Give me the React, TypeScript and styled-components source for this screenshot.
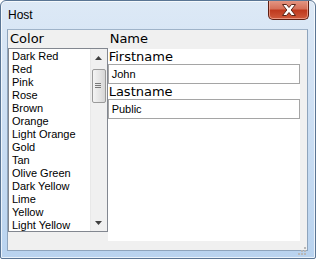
import styled, { createGlobalStyle } from "styled-components";

const GlobalStyle = createGlobalStyle`
  html, body {
    margin: 0;
    padding: 0;
    background: #ffffff;
  }
  * {
    box-sizing: border-box;
  }
`;

const colors = [
  "Dark Red",
  "Red",
  "Pink",
  "Rose",
  "Brown",
  "Orange",
  "Light Orange",
  "Gold",
  "Tan",
  "Olive Green",
  "Dark Yellow",
  "Lime",
  "Yellow",
  "Light Yellow",
];

const StyledWindow = styled.div`
  position: relative;
  width: 316px;
  height: 259px;
  display: flex;
  flex-direction: column;
  border: 1px solid #5a7594;
  border-radius: 6px 6px 2px 2px;
  background: linear-gradient(180deg, #dde9f6 0%, #d2e2f4 30%, #b9d3ef 100%);
  box-shadow: inset 0 0 0 1px rgba(255, 255, 255, 0.7);
  overflow: hidden;
`;

const StyledTitleBar = styled.div`
  height: 28px;
  display: flex;
  align-items: flex-start;
  padding: 7px 0 0 7px;
  font-family: "Liberation Sans", Arial, sans-serif;
  font-size: 12px;
  color: #000000;
`;

const StyledCloseBtn = styled.div`
  position: absolute;
  top: -1px;
  left: 267px;
  width: 41px;
  height: 20px;
  display: flex;
  align-items: center;
  justify-content: center;
  border: 1px solid #5e1e12;
  border-top: none;
  border-radius: 0 0 5px 5px;
  background: linear-gradient(180deg, #e59a88 0%, #d6715a 45%, #bf3a1f 55%, #cf5a3c 100%);
  box-shadow: inset 0 0 0 1px rgba(255, 200, 185, 0.55);
`;

const StyledClient = styled.div`
  flex: 1;
  margin: 0 7px 7px 6px;
  display: flex;
  padding-right: 7px;
  background: #f0f0f0;
  border: 1px solid #8ea4bc;
  border-top-color: #9fb3c9;
`;

const StyledColumn = styled.div<{ $width: number }>`
  width: ${(p) => p.$width}px;
  display: flex;
  flex-direction: column;
`;

const StyledHeading = styled.div<{ $height: number }>`
  height: ${(p) => p.$height}px;
  padding: 1px 0 0 2px;
  font-family: "DejaVu Sans", Verdana, sans-serif;
  font-size: 13px;
  line-height: 16px;
  color: #000000;
`;

const StyledListBox = styled.div`
  height: 184px;
  display: flex;
  border: 1px solid #828790;
  background: #ffffff;
`;

const StyledList = styled.div`
  flex: 1;
  padding: 1px 0 0 3px;
  overflow: hidden;
`;

const StyledItem = styled.div`
  height: 13px;
  font-family: "Liberation Sans", Tahoma, sans-serif;
  font-size: 11px;
  line-height: 13px;
  color: #000000;
  white-space: nowrap;
`;

const StyledScrollBar = styled.div`
  width: 17px;
  display: flex;
  flex-direction: column;
  background: #f0f0f0;
  border-left: 1px solid #e8e8e8;
`;

const StyledArrow = styled.div`
  height: 17px;
  flex-shrink: 0;
  display: flex;
  align-items: center;
  justify-content: center;
`;

const StyledTrack = styled.div`
  flex: 1;
  padding: 3px 1px 0 1px;
`;

const StyledThumb = styled.div`
  height: 34px;
  display: flex;
  align-items: center;
  justify-content: center;
  border: 1px solid #9a9a9a;
  border-radius: 2px;
  background: linear-gradient(90deg, #f4f4f4 0%, #e6e6e6 50%, #d6d6d6 100%);
`;

const StyledPanel = styled.div`
  height: 192px;
  display: flex;
  flex-direction: column;
  background: #ffffff;
`;

const StyledLabel = styled.div`
  height: 15px;
  padding-left: 1px;
  font-family: "DejaVu Sans", Verdana, sans-serif;
  font-size: 13px;
  line-height: 15px;
  color: #000000;
`;

const StyledInput = styled.div`
  height: 20px;
  padding-left: 3px;
  border: 1px solid #a5a5a5;
  font-family: "Liberation Sans", Tahoma, sans-serif;
  font-size: 11px;
  line-height: 18px;
  color: #000000;
`;

const StyledGrip = styled.div`
  position: absolute;
  right: 9px;
  bottom: 9px;
  width: 8px;
  height: 8px;
`;

const CloseGlyph = () => (
  <svg width="16" height="12" viewBox="0 0 16 12">
    <path
      d="M1.5 0.5 L5.5 0.5 L8 3.5 L10.5 0.5 L14.5 0.5 L10.2 6 L14.5 11.5 L10.5 11.5 L8 8.5 L5.5 11.5 L1.5 11.5 L5.8 6 Z"
      fill="#ffffff"
      stroke="#5a2418"
      strokeWidth="1"
      strokeLinejoin="round"
    />
  </svg>
);

const ArrowGlyph = ({ down }: { down?: boolean }) => (
  <svg width="7" height="4" viewBox="0 0 7 4">
    <path d={down ? "M0 0 L7 0 L3.5 4 Z" : "M0 4 L7 4 L3.5 0 Z"} fill="#404040" />
  </svg>
);

const GripLines = () => (
  <svg width="8" height="8" viewBox="0 0 8 8">
    <path d="M0 1.5 H6 M0 3.5 H6 M0 5.5 H6" stroke="#7a7a7a" strokeWidth="1" />
  </svg>
);

const GripDots = () => (
  <svg width="8" height="8" viewBox="0 0 8 8">
    {[
      [6, 0],
      [6, 3],
      [3, 3],
      [6, 6],
      [3, 6],
      [0, 6],
    ].map(([x, y]) => (
      <rect key={`${x}-${y}`} x={x} y={y} width="2" height="2" fill="#b8b8b8" />
    ))}
  </svg>
);

export default function App() {
  return (
    <>
      <GlobalStyle />
      <StyledWindow>
        <StyledTitleBar>Host</StyledTitleBar>
        <StyledCloseBtn>
          <CloseGlyph />
        </StyledCloseBtn>
        <StyledClient>
          <StyledColumn $width={100}>
            <StyledHeading $height={18}>Color</StyledHeading>
            <StyledListBox>
              <StyledList>
                {colors.map((c) => (
                  <StyledItem key={c}>{c}</StyledItem>
                ))}
              </StyledList>
              <StyledScrollBar>
                <StyledArrow>
                  <ArrowGlyph />
                </StyledArrow>
                <StyledTrack>
                  <StyledThumb>
                    <GripLines />
                  </StyledThumb>
                </StyledTrack>
                <StyledArrow>
                  <ArrowGlyph down />
                </StyledArrow>
              </StyledScrollBar>
            </StyledListBox>
          </StyledColumn>
          <StyledColumn $width={193}>
            <StyledHeading $height={19}>Name</StyledHeading>
            <StyledPanel>
              <StyledLabel>Firstname</StyledLabel>
              <StyledInput>John</StyledInput>
              <StyledLabel>Lastname</StyledLabel>
              <StyledInput>Public</StyledInput>
            </StyledPanel>
          </StyledColumn>
        </StyledClient>
        <StyledGrip>
          <GripDots />
        </StyledGrip>
      </StyledWindow>
    </>
  );
}
